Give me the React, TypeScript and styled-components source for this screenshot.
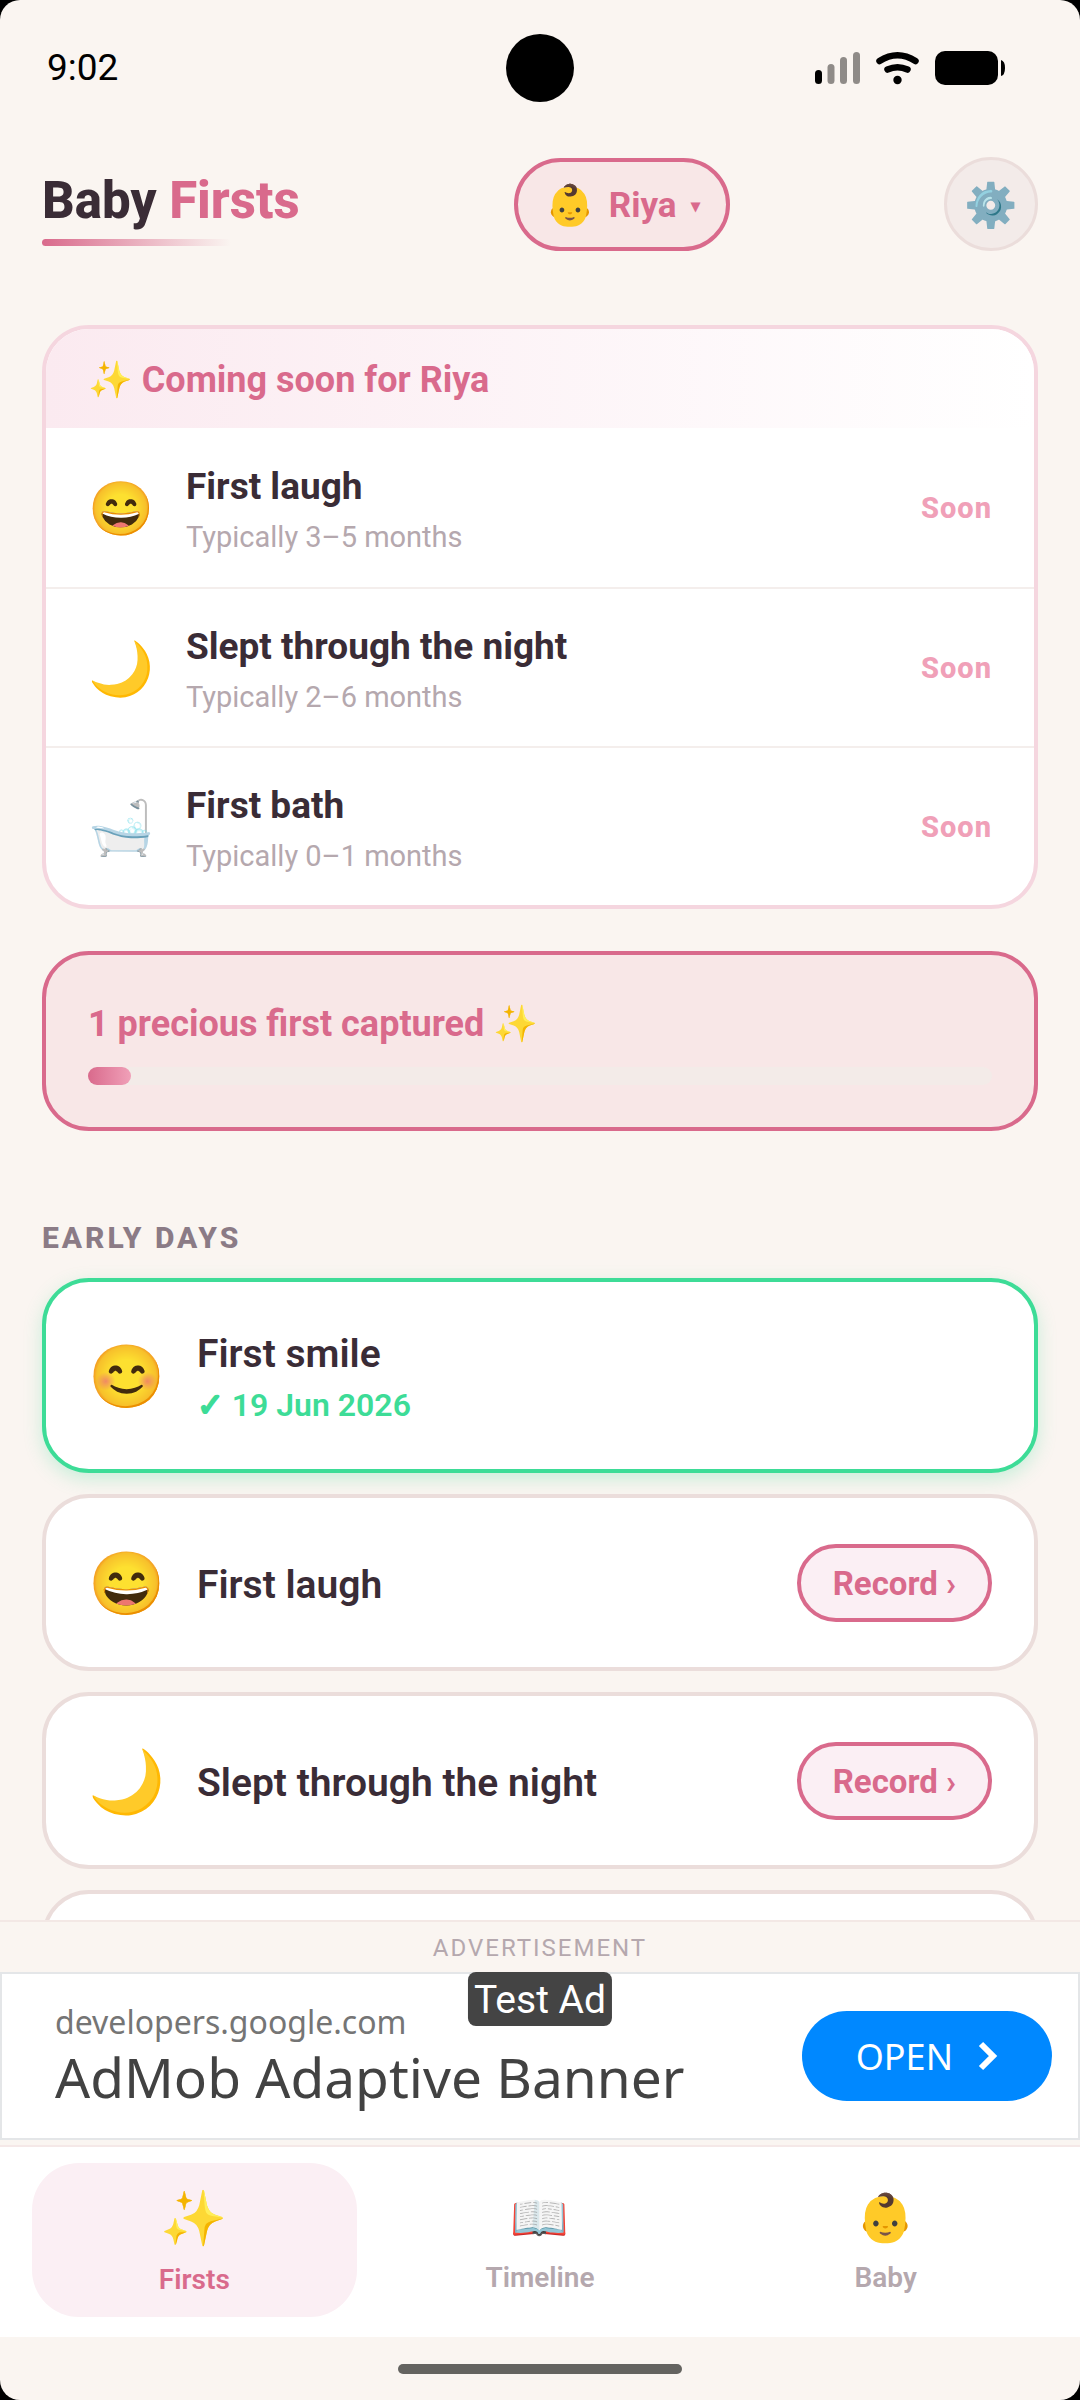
import React from 'react';
import styled, { createGlobalStyle, css } from 'styled-components';

const c = {
  bg: '#faf5f1',
  ink: '#3a2c36',
  rose: '#d96a8c',
  blush: '#f8e7e7',
  petal: '#fbeff4',
  muted: '#b5a8ae',
  line: '#ebdddb',
  hair: '#f4eeec',
  mint: '#3ddc97',
};

const Global = createGlobalStyle`
  *, *::before, *::after { box-sizing: border-box; }
  html, body, #root { height: 100%; margin: 0; }
  body { background: #000; font-family: Roboto, "Noto Color Emoji", sans-serif; color: ${c.ink}; }
  button { font: inherit; color: inherit; cursor: pointer; }
  h1, h2, h3, p, ul { margin: 0; padding: 0; }
  ul { list-style: none; }
`;

const Screen = styled.div`
  height: 100vh;
  display: flex;
  flex-direction: column;
  overflow: hidden;
  background: ${c.bg};
  border-radius: 20px;
`;

const StatusBar = styled.div`
  flex: none;
  display: grid;
  grid-template-columns: 1fr auto 1fr;
  align-items: center;
  height: 136px;
  padding: 0 74px 0 47px;
  color: #000;
  font-size: 37px;
  line-height: 44px;
`;
const Camera = styled.div`
  width: 68px;
  height: 68px;
  margin-left: 27px;
  border-radius: 50%;
  background: #000;
`;
const StatusIcons = styled.div`
  display: flex;
  justify-content: flex-end;
`;

const Header = styled.header`
  flex: none;
  display: flex;
  align-items: center;
  justify-content: space-between;
  padding: 21px 42px 0;
`;
const Brand = styled.div`
  display: flex;
  flex-direction: column;
  gap: 8px;
  padding-top: 8px;
`;
const BrandName = styled.h1`
  font-size: 51px;
  line-height: 60px;
  font-weight: 800;
  span { color: ${c.rose}; }
`;
const BrandRule = styled.div`
  width: 189px;
  height: 7px;
  border-radius: 4px;
  background: linear-gradient(90deg, ${c.rose}, rgba(217, 106, 140, 0));
`;
const ChildPicker = styled.button`
  display: flex;
  align-items: center;
  height: 93px;
  padding: 2px 26px 0 27px;
  border: 4px solid ${c.rose};
  border-radius: 47px;
  background: ${c.blush};
  color: ${c.rose};
  font-size: 35px;
  font-weight: 700;
`;
const ChildFace = styled.span`
  margin-right: 14px;
  font-size: 40px;
`;
const Caret = styled.span`
  margin-left: 14px;
  font-size: 18px;
`;
const SettingsButton = styled.button`
  width: 94px;
  height: 94px;
  padding: 2px 0 0;
  border: 3px solid ${c.line};
  border-radius: 50%;
  background: #f3ebe9;
  font-size: 43px;
`;

const Content = styled.main`
  flex: 1;
  min-height: 0;
  overflow: hidden;
  padding: 74px 42px 0;
`;

const SoonCard = styled.section`
  overflow: hidden;
  border: 4px solid #f5d6df;
  border-radius: 47px;
  background: #fff;
`;
const SoonHeading = styled.h2`
  padding: 4px 42px 0;
  background: linear-gradient(90deg, #fbeaf0, #fff);
  color: ${c.rose};
  font-size: 36px;
  line-height: 95px;
  font-weight: 700;
`;
const SoonRow = styled.li`
  display: flex;
  align-items: center;
  height: 159px;
  padding: 0 42px;
  & + & { border-top: 2px solid ${c.hair}; }
`;
const Emoji = styled.span<{ $large?: boolean }>`
  flex: none;
  width: ${p => (p.$large ? 109 : 98)}px;
  padding-top: 2px;
  font-size: ${p => (p.$large ? 62 : 53)}px;
  line-height: 70px;
`;
const RowText = styled.div`
  flex: 1;
  min-width: 0;
  padding-top: 4px;
`;
const SoonTitle = styled.h3`
  font-size: 37px;
  line-height: 48px;
  font-weight: 700;
`;
const SoonRange = styled.p`
  margin-top: 6px;
  color: ${c.muted};
  font-size: 29px;
  line-height: 40px;
`;
const SoonTag = styled.span`
  color: #f0a0b8;
  font-size: 29px;
  font-weight: 800;
  letter-spacing: 1px;
`;

const ProgressCard = styled.section`
  margin-top: 42px;
  padding: 42px;
  border: 4px solid ${c.rose};
  border-radius: 47px;
  background: ${c.blush};
`;
const ProgressTitle = styled.h2`
  color: ${c.rose};
  font-size: 36px;
  line-height: 54px;
  font-weight: 700;
`;
const Track = styled.div`
  height: 18px;
  margin-top: 16px;
  border-radius: 9px;
  background: #f3ebe8;
`;
const Fill = styled.div`
  height: 100%;
  border-radius: 9px;
  background: linear-gradient(90deg, ${c.rose}, #f0a0b8);
`;

const GroupTitle = styled.h2`
  margin-top: 86px;
  padding-bottom: 19px;
  color: #8b7b86;
  font-size: 30px;
  line-height: 42px;
  font-weight: 800;
  letter-spacing: 3px;
`;
const CardList = styled.ul`
  display: flex;
  flex-direction: column;
  gap: 21px;
`;
const FirstCard = styled.li<{ $done?: boolean }>`
  display: flex;
  align-items: center;
  height: ${p => (p.$done ? 195 : 177)}px;
  padding: 0 42px;
  border: 4px solid ${p => (p.$done ? c.mint : c.line)};
  border-radius: 47px;
  background: #fff;
  ${p => p.$done && css`box-shadow: 0 6px 18px rgba(61, 220, 151, 0.25);`}
`;
const FirstTitle = styled.h3`
  font-size: 39px;
  line-height: 48px;
  font-weight: 600;
`;
const FirstDate = styled.p`
  margin-top: 6px;
  color: ${c.mint};
  font-size: 32px;
  line-height: 42px;
  font-weight: 600;
`;
const Tick = styled.span`
  font-family: "DejaVu Sans", sans-serif;
  font-weight: 700;
  -webkit-text-stroke: 2px ${c.mint};
`;
const RecordButton = styled.button`
  height: 78px;
  padding: 2px 32px 0;
  border: 4px solid ${c.rose};
  border-radius: 39px;
  background: ${c.petal};
  color: ${c.rose};
  font-size: 33px;
  font-weight: 700;
`;

const AdSlot = styled.aside`
  flex: none;
  padding-bottom: 5px;
  border-top: 2px solid #f3e8e5;
`;
const AdLabel = styled.p`
  padding-top: 2px;
  color: ${c.muted};
  font-size: 24px;
  line-height: 48px;
  letter-spacing: 2px;
  text-align: center;
`;
const AdBanner = styled.div`
  position: relative;
  display: flex;
  align-items: center;
  justify-content: space-between;
  height: 168px;
  padding: 0 26px 0 53px;
  border: 2px solid #e4e6e8;
  background: #fff;
  font-family: "Noto Sans", sans-serif;
`;
const AdBadge = styled.span`
  position: absolute;
  top: -2px;
  left: 50%;
  transform: translateX(-50%);
  padding: 2px 6px 0;
  border-radius: 8px;
  background: #444;
  color: #fff;
  font-family: Roboto, sans-serif;
  font-size: 39px;
  line-height: 52px;
`;
const AdHost = styled.p`
  color: #757575;
  font-size: 32px;
  line-height: 42px;
`;
const AdHeadline = styled.p`
  color: #424242;
  font-size: 55px;
  line-height: 68px;
`;
const AdButton = styled.button`
  display: flex;
  align-items: center;
  gap: 25px;
  height: 90px;
  padding: 0 54px;
  border: 0;
  border-radius: 45px;
  background: #0088ff;
  color: #fff;
  font-size: 36px;
`;

const TabBar = styled.nav`
  flex: none;
  display: flex;
  gap: 21px;
  padding: 16px 32px 20px;
  border-top: 2px solid #f5e8e7;
  background: #fff;
`;
const Tab = styled.button<{ $active?: boolean }>`
  flex: 1;
  display: flex;
  flex-direction: column;
  align-items: center;
  justify-content: center;
  gap: 8px;
  height: 154px;
  padding: ${p => (p.$active ? 2 : 0)}px 0 0;
  border: 0;
  border-radius: 47px;
  background: ${p => (p.$active ? c.petal : 'transparent')};
  color: ${p => (p.$active ? c.rose : c.muted)};
  font-size: 28px;
  line-height: 36px;
  font-weight: 600;
`;
const TabIcon = styled.span<{ $active?: boolean }>`
  font-size: ${p => (p.$active ? 54 : 47)}px;
  line-height: ${p => (p.$active ? 70 : 68)}px;
`;
const HomeArea = styled.div`
  flex: none;
  display: flex;
  justify-content: center;
  padding: 27px 0 26px;
`;
const HomeBar = styled.div`
  width: 284px;
  height: 10px;
  border-radius: 5px;
  background: #646360;
`;

const soon = [
  { emoji: '😄', title: 'First laugh', range: 'Typically 3–5 months' },
  { emoji: '🌙', title: 'Slept through the night', range: 'Typically 2–6 months' },
  { emoji: '🛁', title: 'First bath', range: 'Typically 0–1 months' },
];
const firsts = [
  { emoji: '😊', title: 'First smile', date: '19 Jun 2026' },
  { emoji: '😄', title: 'First laugh' },
  { emoji: '🌙', title: 'Slept through the night' },
];
const tabs = [
  { emoji: '✨', label: 'Firsts' },
  { emoji: '📖', label: 'Timeline' },
  { emoji: '👶', label: 'Baby' },
];

const DeviceIcons = () => (
  <svg width="192" height="36" viewBox="814 50 192 36" aria-hidden="true">
    <rect x="815" y="70" width="7" height="14" rx="3.500" />
    <g fill="#8f8b88">
      <rect x="827.500" y="64" width="7" height="20" rx="3.500" />
      <rect x="840" y="57" width="7" height="27" rx="3.500" />
      <rect x="853" y="52" width="7" height="32" rx="3.500" />
    </g>
    <g fill="none" stroke="#000" strokeWidth="6.500" strokeLinecap="round">
      <path d="M879.500 61 Q897.500 49.500 915.500 61" />
      <path d="M887.500 69.500 Q897.500 65 907.500 69.500" />
    </g>
    <circle cx="897.500" cy="80" r="4.200" />
    <rect x="935" y="51" width="63" height="34" rx="10" />
    <path d="M1001 60 q4 1 4 8 t-4 8 z" />
  </svg>
);

export default function App() {
  const total = 21;
  return (
    <>
      <Global />
      <Screen>
        <StatusBar>
          <span>9:02</span>
          <Camera />
          <StatusIcons><DeviceIcons /></StatusIcons>
        </StatusBar>
        <Header>
          <Brand>
            <BrandName>Baby <span>Firsts</span></BrandName>
            <BrandRule />
          </Brand>
          <ChildPicker>
            <ChildFace>👶</ChildFace>Riya<Caret>▾</Caret>
          </ChildPicker>
          <SettingsButton aria-label="Settings">⚙️</SettingsButton>
        </Header>
        <Content>
          <SoonCard>
            <SoonHeading>✨ Coming soon for Riya</SoonHeading>
            <ul>
              {soon.map(s => (
                <SoonRow key={s.title}>
                  <Emoji>{s.emoji}</Emoji>
                  <RowText>
                    <SoonTitle>{s.title}</SoonTitle>
                    <SoonRange>{s.range}</SoonRange>
                  </RowText>
                  <SoonTag>Soon</SoonTag>
                </SoonRow>
              ))}
            </ul>
          </SoonCard>
          <ProgressCard>
            <ProgressTitle>1 precious first captured ✨</ProgressTitle>
            <Track><Fill style={{ width: `${100 / total}%` }} /></Track>
          </ProgressCard>
          <GroupTitle>EARLY DAYS</GroupTitle>
          <CardList>
            {firsts.map(f => (
              <FirstCard key={f.title} $done={!!f.date}>
                <Emoji $large>{f.emoji}</Emoji>
                <RowText>
                  <FirstTitle>{f.title}</FirstTitle>
                  {f.date && <FirstDate><Tick>✓</Tick> {f.date}</FirstDate>}
                </RowText>
                {!f.date && <RecordButton>Record ›</RecordButton>}
              </FirstCard>
            ))}
            <FirstCard />
          </CardList>
        </Content>
        <AdSlot>
          <AdLabel>ADVERTISEMENT</AdLabel>
          <AdBanner>
            <div>
              <AdHost>developers.google.com</AdHost>
              <AdHeadline>AdMob Adaptive Banner</AdHeadline>
            </div>
            <AdBadge>Test Ad</AdBadge>
            <AdButton>
              OPEN
              <svg width="20" height="30" viewBox="0 0 20 30" aria-hidden="true">
                <path d="M3 3 L15 15 L3 27" fill="none" stroke="#fff" strokeWidth="6" />
              </svg>
            </AdButton>
          </AdBanner>
        </AdSlot>
        <TabBar>
          {tabs.map((t, i) => (
            <Tab key={t.label} $active={i === 0}>
              <TabIcon $active={i === 0}>{t.emoji}</TabIcon>
              {t.label}
            </Tab>
          ))}
        </TabBar>
        <HomeArea><HomeBar /></HomeArea>
      </Screen>
    </>
  );
}
